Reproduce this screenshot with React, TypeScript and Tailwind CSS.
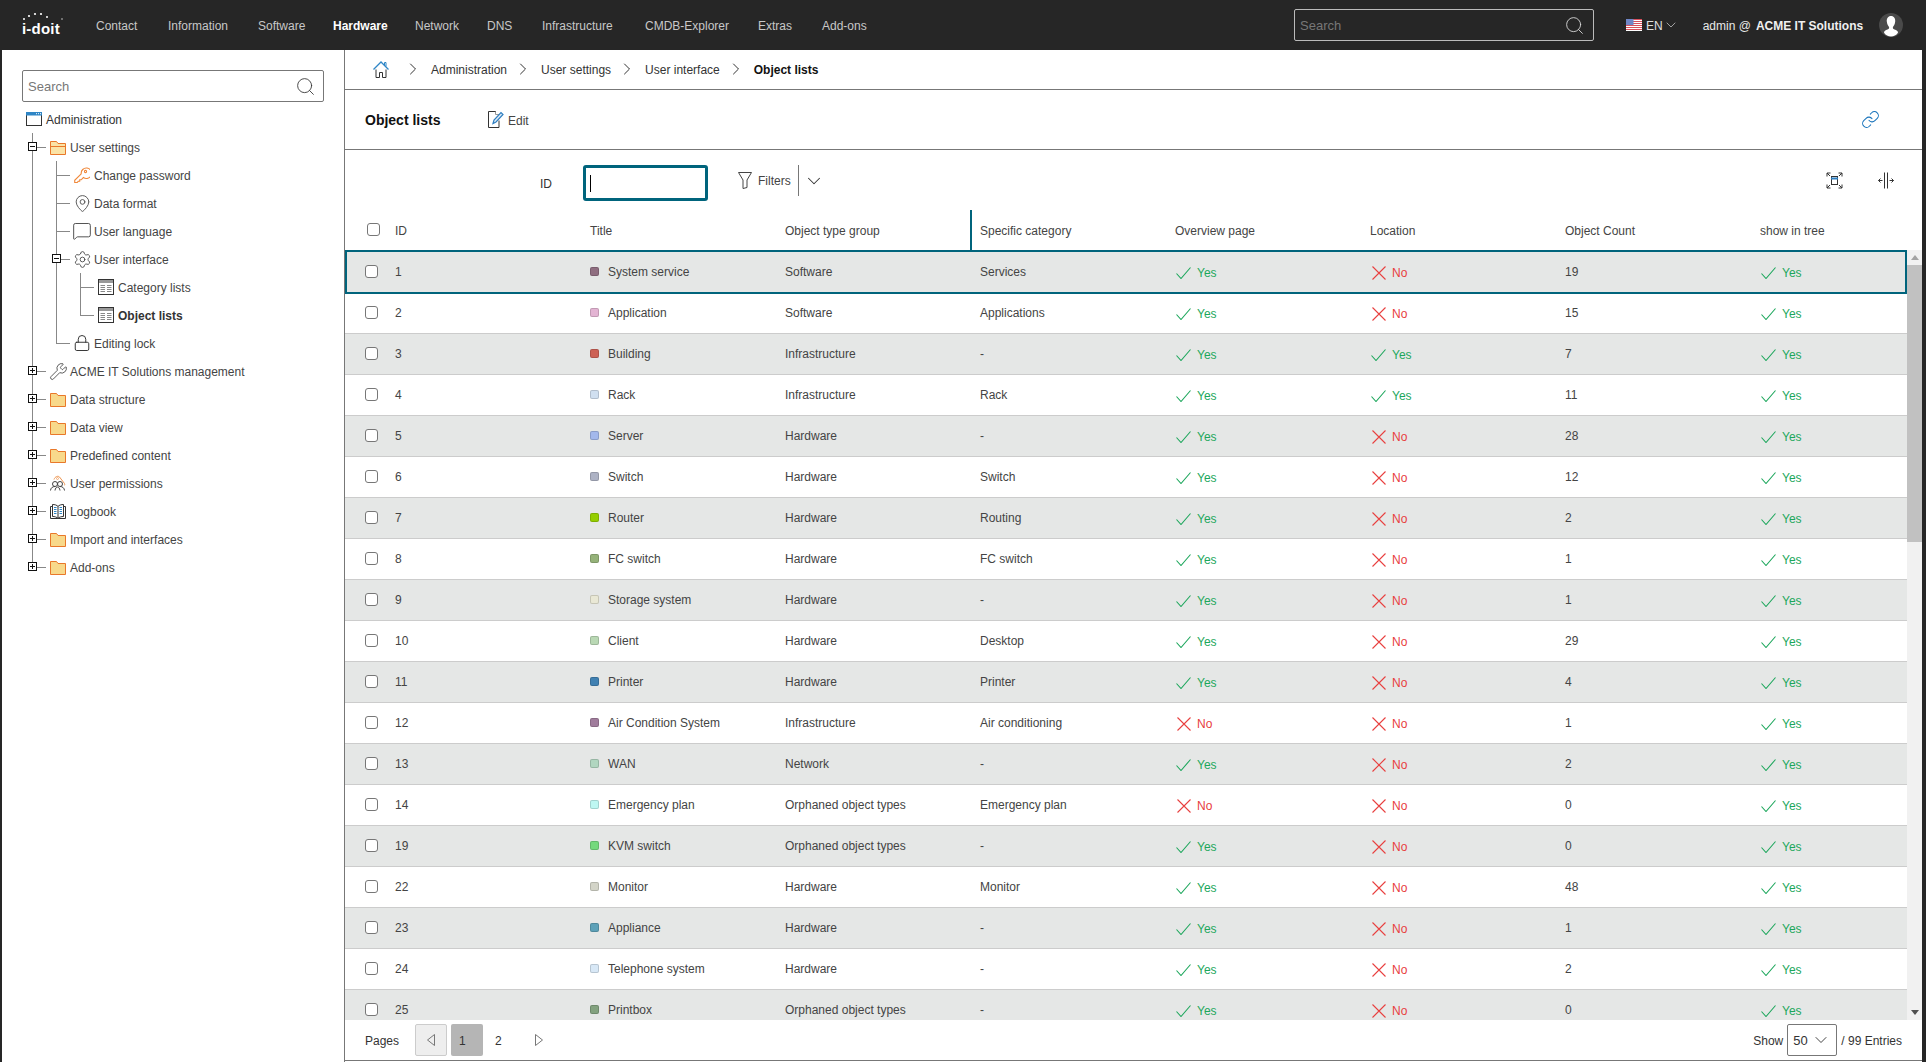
import { ReactNode } from 'react';
import { ChevronDown, ChevronRight, Link, Lock, MapPin, MessageSquare, Search, Settings, Wrench } from 'lucide-react';

const navItems = [
  { label: 'Contact', width: 'w-[72px]' },
  { label: 'Information', width: 'w-[90px]' },
  { label: 'Software', width: 'w-[75px]' },
  { label: 'Hardware', width: 'w-[82px]', active: true },
  { label: 'Network', width: 'w-[72px]' },
  { label: 'DNS', width: 'w-[55px]' },
  { label: 'Infrastructure', width: 'w-[103px]' },
  { label: 'CMDB-Explorer', width: 'w-[113px]' },
  { label: 'Extras', width: 'w-[64px]' },
  { label: 'Add-ons', width: 'w-[60px]' },
];

const rows = [
  { id: 1, title: 'System service', color: 'bg-[#8f6e80]', group: 'Software', specific: 'Services', overview: true, location: false, count: 19 },
  { id: 2, title: 'Application', color: 'bg-[#e3b4d3]', group: 'Software', specific: 'Applications', overview: true, location: false, count: 15 },
  { id: 3, title: 'Building', color: 'bg-[#cd6155]', group: 'Infrastructure', specific: '-', overview: true, location: true, count: 7 },
  { id: 4, title: 'Rack', color: 'bg-[#d0dff0]', group: 'Infrastructure', specific: 'Rack', overview: true, location: true, count: 11 },
  { id: 5, title: 'Server', color: 'bg-[#a3b8ec]', group: 'Hardware', specific: '-', overview: true, location: false, count: 28 },
  { id: 6, title: 'Switch', color: 'bg-[#adb2c4]', group: 'Hardware', specific: 'Switch', overview: true, location: false, count: 12 },
  { id: 7, title: 'Router', color: 'bg-[#95ce00]', group: 'Hardware', specific: 'Routing', overview: true, location: false, count: 2 },
  { id: 8, title: 'FC switch', color: 'bg-[#95b279]', group: 'Hardware', specific: 'FC switch', overview: true, location: false, count: 1 },
  { id: 9, title: 'Storage system', color: 'bg-[#e9e8d5]', group: 'Hardware', specific: '-', overview: true, location: false, count: 1 },
  { id: 10, title: 'Client', color: 'bg-[#b9d8b4]', group: 'Hardware', specific: 'Desktop', overview: true, location: false, count: 29 },
  { id: 11, title: 'Printer', color: 'bg-[#4081b2]', group: 'Hardware', specific: 'Printer', overview: true, location: false, count: 4 },
  { id: 12, title: 'Air Condition System', color: 'bg-[#a07c9c]', group: 'Infrastructure', specific: 'Air conditioning', overview: false, location: false, count: 1 },
  { id: 13, title: 'WAN', color: 'bg-[#b1d6c0]', group: 'Network', specific: '-', overview: true, location: false, count: 2 },
  { id: 14, title: 'Emergency plan', color: 'bg-[#bef7f2]', group: 'Orphaned object types', specific: 'Emergency plan', overview: false, location: false, count: 0 },
  { id: 19, title: 'KVM switch', color: 'bg-[#74d97c]', group: 'Orphaned object types', specific: '-', overview: true, location: false, count: 0 },
  { id: 22, title: 'Monitor', color: 'bg-[#d3d4c8]', group: 'Hardware', specific: 'Monitor', overview: true, location: false, count: 48 },
  { id: 23, title: 'Appliance', color: 'bg-[#5da1b8]', group: 'Hardware', specific: '-', overview: true, location: false, count: 1 },
  { id: 24, title: 'Telephone system', color: 'bg-[#d8e8f6]', group: 'Hardware', specific: '-', overview: true, location: false, count: 2 },
  { id: 25, title: 'Printbox', color: 'bg-[#83a27f]', group: 'Orphaned object types', specific: '-', overview: true, location: false, count: 0 },
];

const headers = ['ID', 'Title', 'Object type group', 'Specific category', 'Overview page', 'Location', 'Object Count', 'show in tree'];

function FolderIcon({ open }: { open?: boolean }) {
  return (
    <svg width="16" height="15" viewBox="0 0 16 15" fill="none">
      <path d="M.5 14.5V1.5h6l1.5 2h7.5v11z" fill={open ? '#fbe3a6' : '#f8d98b'} stroke="#e9782a" />
      {open && <path d="M.5 6.5h15" stroke="#e9782a" />}
    </svg>
  );
}

function KeyIcon() {
  return (
    <svg width="16" height="16" viewBox="0 0 16 16" fill="none" stroke="#f0883a" strokeWidth="1.100">
      <path d="M7.200 6.800.7 13.300v2.200h2.500l1-1.200h1.500v-1.500h1.500l2.200-2.300A5.200 5.200 0 1 0 7.200 6.800z" />
      <circle cx="11.500" cy="4.500" r="1.100" />
    </svg>
  );
}

function TableIcon() {
  return (
    <svg width="16" height="16" viewBox="0 0 16 16" fill="none">
      <rect x=".5" y=".5" width="15" height="15" fill="#fff" stroke="#333" />
      <rect x="1" y="1" width="14" height="3" fill="#999" />
      <path d="M2.500 6.500h4.500M9 6.500h4.500M2.500 8.500h4.500M9 8.500h4.500M2.500 10.500h4.500M9 10.500h4.500M2.500 12.500h4.500M9 12.500h4.500" stroke="#888" />
    </svg>
  );
}

function WindowIcon() {
  return (
    <svg width="16" height="14" viewBox="0 0 16 14" fill="none">
      <rect x=".5" y=".5" width="15" height="13" fill="#fff" stroke="#333" />
      <rect x="0" y="0" width="16" height="3.500" fill="#2f86c6" />
      <path d="M10 1.700h1M12 1.700h1M14 1.700h1" stroke="#fff" />
    </svg>
  );
}

function PermissionIcon() {
  return (
    <svg width="16" height="16" viewBox="0 0 16 16" fill="none">
      <path d="M4 4.500C5 1.500 8 .5 9.500 2l5 6.500c.7 1 .3 1.500-.5 1.500" stroke="#ee9550" />
      <circle cx="7.500" cy="3.500" r="1" stroke="#ee9550" strokeWidth=".7" />
      <circle cx="5" cy="9" r="2.500" stroke="#444" />
      <circle cx="10" cy="9" r="2.500" stroke="#444" />
      <path d="M.5 15.500c.2-2.500 2-4 4.500-4M14.500 15.500c-.2-2.500-2-4-4.500-4M5 15.500c.3-2 1.200-3.500 2.500-3.500s2.200 1.500 2.500 3.500" stroke="#444" />
    </svg>
  );
}

function LogbookIcon() {
  return (
    <svg width="16" height="15" viewBox="0 0 16 15" fill="none">
      <path d="M2.500 2.500H.5v12h15v-12h-2" stroke="#333" />
      <path d="M8 2.500C7 1 4.500.5 2.500.5v12c2 0 4.500.5 5.500 2 1-1.500 3.500-2 5.500-2V.5C11.500.5 9 1 8 2.500zM8 2.500v12" fill="#fff" stroke="#333" />
      <path d="M4 3.500h2.500M4 5.500h2.500M4 7.500h2.500M4 9.500h2.500M9.500 3.500H12M9.500 5.500H12M9.500 7.500H12M9.500 9.500H12" stroke="#2f86c6" />
    </svg>
  );
}

function TreeNode({ icon, label, state, bold, children }: { icon: ReactNode; label: string; state?: 'open' | 'closed'; bold?: boolean; children?: ReactNode }) {
  return (
    <li>
      <div className="flex h-[28px] items-center">
        <div className="relative flex h-full w-[14px] items-center">
          <span className="h-px w-full bg-[#888]" />
          {state && (
            <span className="absolute left-[-4px] top-[9px] flex h-[9px] w-[9px] items-center justify-center border border-[#111] bg-white">
              <span className="absolute h-px w-[5px] bg-[#111]" />
              {state === 'closed' && <span className="absolute h-[5px] w-px bg-[#111]" />}
            </span>
          )}
        </div>
        <div className="ml-[4px] flex w-[16px] items-center justify-center">{icon}</div>
        <span className={bold ? 'ml-[4px] pt-[2px] font-bold text-[#333]' : 'ml-[4px] pt-[2px]'}>{label}</span>
      </div>
      {children}
    </li>
  );
}

function TreeList({ children, className }: { children: ReactNode; className: string }) {
  return (
    <ul className={`relative ${className}`}>
      <span className="absolute bottom-[14px] left-0 top-0 w-px bg-[#888]" />
      {children}
    </ul>
  );
}

function Sidebar() {
  return (
    <aside className="flex w-[343px] shrink-0 flex-col border-r border-[#777] bg-white pl-[20px] pt-[20px] text-[12px] text-[#444]">
      <div className="flex h-[32px] w-[302px] items-center rounded-[2px] border border-[#777] pl-[5px] pr-[7px]">
        <input placeholder="Search" className="min-w-0 flex-1 pt-[2px] text-[13px] outline-none placeholder:text-[#777]" />
        <Search size={21} strokeWidth={1} className="text-[#333]" />
      </div>
      <div className="ml-[4px] mt-[3px] flex h-[28px] items-center gap-[4px]">
        <WindowIcon />
        <span className="pt-[2px] text-[#333]">Administration</span>
      </div>
      <TreeList className="ml-[10px]">
        <TreeNode icon={<FolderIcon open />} label="User settings" state="open">
          <TreeList className="ml-[24px]">
            <TreeNode icon={<KeyIcon />} label="Change password" />
            <TreeNode icon={<MapPin size={19} strokeWidth={1.2} className="shrink-0 text-[#555]" />} label="Data format" />
            <TreeNode icon={<MessageSquare size={20} strokeWidth={1.1} className="shrink-0 text-[#444]" />} label="User language" />
            <TreeNode icon={<Settings size={19} strokeWidth={1.1} className="shrink-0 text-[#444]" />} label="User interface" state="open">
              <TreeList className="ml-[24px]">
                <TreeNode icon={<TableIcon />} label="Category lists" />
                <TreeNode icon={<TableIcon />} label="Object lists" bold />
              </TreeList>
            </TreeNode>
            <TreeNode icon={<Lock size={18} strokeWidth={1.3} className="shrink-0 text-[#333]" />} label="Editing lock" />
          </TreeList>
        </TreeNode>
        <TreeNode icon={<Wrench size={19} strokeWidth={1.1} className="shrink-0 text-[#444]" />} label="ACME IT Solutions management" state="closed" />
        <TreeNode icon={<FolderIcon />} label="Data structure" state="closed" />
        <TreeNode icon={<FolderIcon />} label="Data view" state="closed" />
        <TreeNode icon={<FolderIcon />} label="Predefined content" state="closed" />
        <TreeNode icon={<PermissionIcon />} label="User permissions" state="closed" />
        <TreeNode icon={<LogbookIcon />} label="Logbook" state="closed" />
        <TreeNode icon={<FolderIcon />} label="Import and interfaces" state="closed" />
        <TreeNode icon={<FolderIcon />} label="Add-ons" state="closed" />
      </TreeList>
    </aside>
  );
}

function Logo() {
  return (
    <div className="relative w-[74px] text-[15px] font-bold leading-none tracking-[0.2px] text-white">
      <span className="relative top-[3px]">i-doit</span>
      <svg className="absolute left-0 top-[-7px]" width="44" height="12" viewBox="0 0 44 12" fill="#fff">
        <circle cx="2" cy="8" r="1" />
        <circle cx="7" cy="5" r="1.100" />
        <circle cx="13" cy="3" r="1.100" />
        <circle cx="19" cy="3" r="1.100" />
        <circle cx="25" cy="6" r="1" />
        <circle cx="40" cy="8" r="1" fill="#888" />
      </svg>
    </div>
  );
}

function Flag() {
  return (
    <svg width="16" height="12" viewBox="0 0 16 12">
      <rect width="16" height="12" fill="#fff" />
      <path d="M0 .5h16M0 2.500h16M0 4.500h16M0 6.500h16M0 8.500h16M0 10.500h16" stroke="#d8505c" />
      <rect width="7.500" height="6" fill="#6f86c7" />
    </svg>
  );
}

function Avatar() {
  return (
    <svg width="24" height="24" viewBox="0 0 24 24">
      <circle cx="12" cy="12" r="12" fill="#4a4a4a" />
      <path d="M12 3c3 0 4.500 2.500 4.200 5.500-.3 2.800-1.500 4.500-2.200 5.500-.4 1 0 2 1.500 2.600 2 .7 3.500 1.400 3.500 3.200-1.800 2.600-4 3.700-7 3.700s-5.200-1.100-7-3.700c0-1.800 1.500-2.500 3.500-3.200 1.500-.6 1.900-1.600 1.500-2.600-.7-1-1.900-2.700-2.200-5.500C7.500 5.500 9 3 12 3z" fill="#fff" />
    </svg>
  );
}

function TopBar() {
  return (
    <header className="flex h-[50px] shrink-0 items-center bg-[#262626] pl-[22px] text-[12px] text-[#c8c8c8]">
      <Logo />
      <nav className="flex items-center pt-[2px]">
        {navItems.map((item) => (
          <span key={item.label} className={`${item.width} ${item.active ? 'font-bold text-white' : ''}`}>
            {item.label}
          </span>
        ))}
      </nav>
      <div className="ml-[412px] flex h-[32px] w-[300px] items-center rounded-[2px] border border-[#bbb] pl-[5px] pr-[8px]">
        <input placeholder="Search" className="min-w-0 flex-1 bg-transparent pt-[2px] text-[13px] outline-none placeholder:text-[#777]" />
        <Search size={21} strokeWidth={1} className="text-[#ddd]" />
      </div>
      <div className="ml-[32px] flex items-center">
        <Flag />
        <span className="ml-[4px] pt-[2px] text-[#e0e0e0]">EN</span>
        <ChevronDown size={16} strokeWidth={1.1} className="text-[#ccc]" />
      </div>
      <span className="ml-[24px] pt-[2px] text-[#e8e8e8]">admin @</span>
      <span className="ml-[5px] pt-[2px] font-bold text-[#f0f0f0]">ACME IT Solutions</span>
      <div className="ml-[16px]">
        <Avatar />
      </div>
    </header>
  );
}

function HomeIcon() {
  return (
    <svg width="16" height="17" viewBox="0 0 16 17" fill="none">
      <path d="M3 8.500v8h3.500v-5h3v5H13v-8" stroke="#333" />
      <path d="M.5 8.500 8 1l7.500 7.500" stroke="#2f86c6" strokeWidth="1.300" />
      <path d="M11.500 4V1.500h1.500v4" stroke="#2f86c6" />
    </svg>
  );
}

function Breadcrumb() {
  const items = ['Administration', 'User settings', 'User interface'];
  return (
    <div className="flex h-[40px] shrink-0 items-center border-b border-[#777] pl-[28px] pb-[1px] text-[12px] text-[#333]">
      <HomeIcon />
      <ChevronRight size={20} strokeWidth={1.2} className="ml-[14px] text-[#333]" />
      {items.map((item) => (
        <div key={item} className="flex items-center">
          <span className="ml-[8px] pt-[2px]">{item}</span>
          <ChevronRight size={20} strokeWidth={1.2} className="ml-[6px] text-[#333]" />
        </div>
      ))}
      <span className="ml-[8px] pt-[2px] font-bold text-[#111]">Object lists</span>
    </div>
  );
}

function EditIcon() {
  return (
    <svg width="16" height="17" viewBox="0 0 16 17" fill="none">
      <path d="M8 .5H.5v16h10.500v-7" stroke="#333" />
      <path d="M7.500.5v3H11" stroke="#999" />
      <path d="M5 12.500l1-3.500 7-7.500 2 2-7 7.500z" fill="#dbeaf7" stroke="#2f7fc1" strokeWidth="1.200" />
    </svg>
  );
}

function FilterIcon() {
  return (
    <svg width="14" height="17" viewBox="0 0 14 17" fill="none" stroke="#444">
      <path d="M.5.5h13L9 8v7.500l-4 1V8z" />
    </svg>
  );
}

function FitIcon() {
  return (
    <svg width="17" height="17" viewBox="0 0 17 17" fill="none" stroke="#333">
      <path d="M1 4.500V1h3.500M1 1l3 3M16 4.500V1h-3.500M16 1l-3 3M1 12.500V16h3.500M1 16l3-3M16 12.500V16h-3.500M16 16l-3-3" />
      <rect x="5.500" y="4.500" width="6" height="8" stroke="#333" />
      <rect x="5" y="5.500" width="7" height="2" fill="#2f7fc1" stroke="none" />
    </svg>
  );
}

function ColumnsIcon() {
  return (
    <svg width="16" height="17" viewBox="0 0 16 17" fill="none" stroke="#333">
      <path d="M6.500.5v16M9.500.5v16M.5 8.500h4M11.500 8.500h4M2.500 6.500l-2 2 2 2M13.500 6.500l2 2-2 2" />
    </svg>
  );
}

function TitleBar() {
  return (
    <div className="flex h-[60px] shrink-0 items-center border-b border-[#777] pl-[20px] pr-[42px] text-[12px]">
      <span className="w-[123px] pt-[2px] text-[14px] font-bold text-[#111]">Object lists</span>
      <EditIcon />
      <span className="ml-[4px] pt-[2px] text-[#444]">Edit</span>
      <Link size={19} strokeWidth={1.3} className="ml-auto text-[#1b75bc]" />
    </div>
  );
}

function FilterBar() {
  return (
    <div className="flex h-[60px] shrink-0 items-start pl-[195px] pt-[15px] text-[12px] text-[#333]">
      <span className="mt-[10px]">ID</span>
      <div className="ml-[31px] flex h-[36px] w-[125px] items-center rounded-[3px] border-[3px] border-[#00647c] pl-[4px]">
        <span className="h-[17px] w-px bg-black" />
      </div>
      <div className="ml-[30px] flex h-[31px] items-center">
        <FilterIcon />
        <span className="ml-[6px] text-[#444]">Filters</span>
        <span className="ml-[7px] h-full w-px bg-[#777]" />
        <ChevronDown size={22} strokeWidth={1.1} className="ml-[4px] text-[#333]" />
      </div>
      <div className="ml-auto mr-[28px] flex items-center gap-[35px] pt-[7px]">
        <FitIcon />
        <ColumnsIcon />
      </div>
    </div>
  );
}

function Checkbox() {
  return <span className="block h-[13px] w-[13px] rounded-[3px] border border-[#777] bg-white" />;
}

function Status({ value }: { value: boolean }) {
  if (value) {
    return (
      <div className="flex items-center pl-[1px] pt-[2px] text-[#1da75c]">
        <svg width="15" height="12" viewBox="0 0 15 12" fill="none" stroke="#1da75c" strokeWidth="1.100">
          <path d="M.5 6.500 5 11.500 14.500.5" />
        </svg>
        <span className="ml-[6px]">Yes</span>
      </div>
    );
  }
  return (
    <div className="flex items-center pl-[2px] pt-[2px] text-[#e8403f]">
      <svg width="14" height="14" viewBox="0 0 14 14" fill="none" stroke="#e8403f" strokeWidth="1.100">
        <path d="M.5.5 13.500 13.500M13.500.5 .5 13.500" />
      </svg>
      <span className="ml-[6px]">No</span>
    </div>
  );
}

function ObjectTable() {
  return (
    <>
      <div className="grid h-[40px] shrink-0 grid-cols-[42px_repeat(7,195px)_1fr] items-center text-[12px] text-[#444]">
        <div className="pb-[1px] pl-[22px]">
          <Checkbox />
        </div>
        {headers.map((header) => (
          <div key={header} className={header === 'Object type group' ? 'flex h-full items-center border-r-2 border-[#00647c] pl-[8px] pt-[2px]' : 'pl-[8px] pt-[2px]'}>
            {header}
          </div>
        ))}
      </div>
      <div className="flex h-[770px] shrink-0">
        <div className="min-w-0 flex-1 overflow-hidden pt-[2px]">
          {rows.map((row, index) => (
            <div
              key={row.id}
              className={`relative grid h-[41px] grid-cols-[42px_repeat(7,195px)_1fr] items-center border-b border-[#ccc] text-[12px] text-[#444] ${index % 2 === 0 ? 'bg-[#e5e7e6]' : 'bg-white'}`}
            >
              {index === 0 && <span className="absolute -bottom-[2px] -top-[2px] left-0 right-0 z-10 border-2 border-[#00647c]" />}
              <div className="pb-[2px] pl-[20px]">
                <Checkbox />
              </div>
              <div className="pb-[1px] pl-[8px]">{row.id}</div>
              <div className="flex items-center pb-[1px] pl-[8px]">
                <span className={`h-[9px] w-[9px] rounded-[2px] border border-black/15 ${row.color}`} />
                <span className="ml-[9px]">{row.title}</span>
              </div>
              <div className="pb-[1px] pl-[8px]">{row.group}</div>
              <div className="pb-[1px] pl-[8px]">{row.specific}</div>
              <div className="pl-[8px]">
                <Status value={row.overview} />
              </div>
              <div className="pl-[8px]">
                <Status value={row.location} />
              </div>
              <div className="pb-[1px] pl-[8px]">{row.count}</div>
              <div className="pl-[8px]">
                <Status value />
              </div>
            </div>
          ))}
        </div>
        <div className="flex w-[15px] shrink-0 flex-col bg-[#f1f1f1]">
          <div className="flex h-[15px] items-center justify-center">
            <span className="h-0 w-0 border-x-[4px] border-b-[5px] border-x-transparent border-b-[#a3a3a3]" />
          </div>
          <div className="h-[277px] bg-[#c1c1c1]" />
          <div className="mt-auto flex h-[15px] items-center justify-center">
            <span className="h-0 w-0 border-x-[4px] border-t-[5px] border-x-transparent border-t-[#505050]" />
          </div>
        </div>
      </div>
    </>
  );
}

function Footer() {
  return (
    <div className="flex h-[41px] shrink-0 items-center border-b border-[#777] pb-[1px] pl-[20px] pr-[20px] text-[12px] text-[#333]">
      <span className="w-[50px] pt-[2px]">Pages</span>
      <div className="flex h-[32px] w-[32px] items-center justify-center rounded-[2px] border border-[#ccc] bg-[#eee]">
        <svg width="8" height="12" viewBox="0 0 8 12" fill="none" stroke="#777">
          <path d="M7.500.5v11L.5 6z" />
        </svg>
      </div>
      <div className="ml-[4px] flex h-[32px] w-[32px] items-center rounded-[2px] bg-[#b5b5b5] pl-[8px] pt-[2px]">1</div>
      <div className="ml-[4px] flex h-[32px] w-[32px] items-center pl-[8px] pt-[2px]">2</div>
      <svg className="ml-[16px]" width="8" height="12" viewBox="0 0 8 12" fill="none" stroke="#777">
        <path d="M.5.5v11L7.500 6z" />
      </svg>
      <span className="ml-auto pt-[2px]">Show</span>
      <div className="ml-[4px] flex h-[32px] w-[50px] items-center rounded-[2px] border border-[#777] pl-[5px] text-[13px]">
        <span className="pt-[2px]">50</span>
        <ChevronDown size={20} strokeWidth={1.1} className="ml-[3px] text-[#333]" />
      </div>
      <span className="ml-[4px] pt-[2px]">/ 99 Entries</span>
    </div>
  );
}

export default function App() {
  return (
    <div className="flex h-[1062px] w-full flex-col overflow-hidden bg-[#262626] font-['Liberation_Sans',Arial,sans-serif]">
      <TopBar />
      <div className="flex flex-1 pl-[2px] pr-[4px]">
        <Sidebar />
        <main className="flex min-w-0 flex-1 flex-col bg-white">
          <Breadcrumb />
          <TitleBar />
          <FilterBar />
          <ObjectTable />
          <Footer />
        </main>
      </div>
    </div>
  );
}
